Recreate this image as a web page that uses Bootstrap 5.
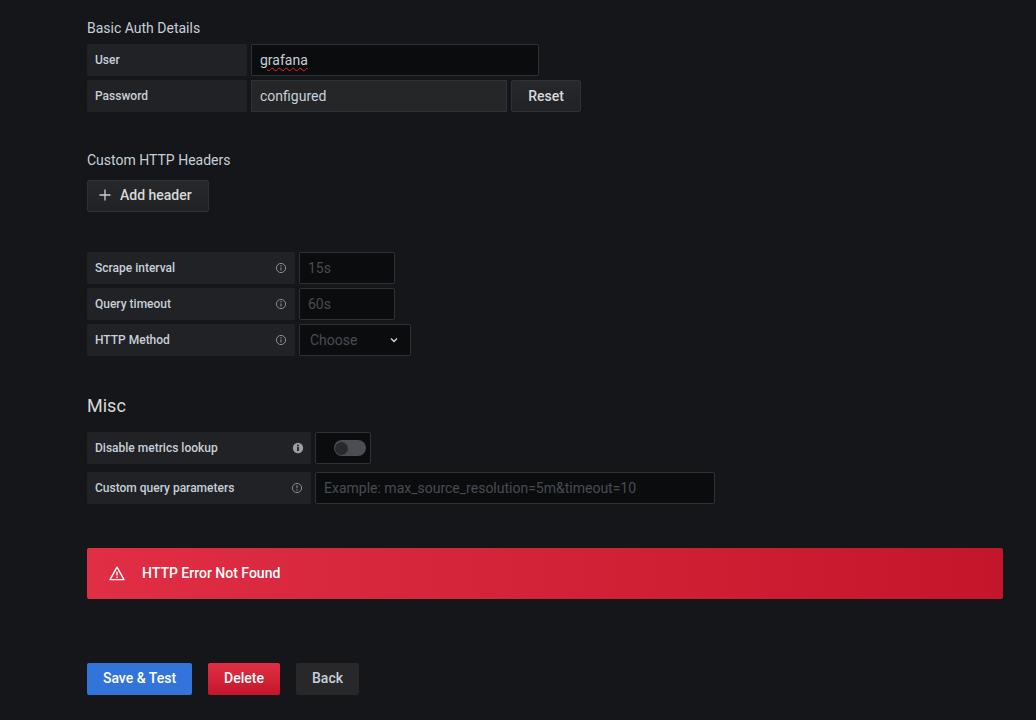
<!DOCTYPE html>
<html lang="en">
<head>
<meta charset="utf-8">
<title>Data source settings</title>
<link href="https://cdn.jsdelivr.net/npm/bootstrap@5.3.0/dist/css/bootstrap.min.css" rel="stylesheet">
<style>
html,body{height:720px;overflow:hidden}
body{background:#141619;color:#c7d0d9;font-family:Roboto,"Liberation Sans",sans-serif;font-size:14px}
.pg{padding:19px 33px 0 87px}
.sec-t{font-size:14px;line-height:18px;color:#c7d0d9;font-weight:400;margin:0 0 7px}
.sec-h{margin-bottom:11px}
.fgrid{display:flex;flex-direction:column;gap:4px}
.frow{display:flex;gap:4px;height:32px}
.flab{background:#202226;border-radius:2px;font-size:12px;font-weight:500;color:#c7d0d9;padding:0 8px;display:flex;align-items:center;justify-content:space-between;height:32px;flex:none;margin:0}
.w160{width:160px}.w208{width:208px}.w224{width:224px}
.finp{background:#0b0c0e;border:1px solid #2c3235;border-radius:2px;color:#c7d0d9;font-size:14px;height:32px;padding:0 8px;outline:0;flex:none;font-family:inherit;display:flex;align-items:center}
.finp::placeholder{color:#464c54;opacity:1}
.w288{width:288px}.w96{width:96px}.w400{width:400px}
.spell{text-decoration:underline wavy #f0202c 1px;text-underline-offset:2px}
.fro{background:#242628;border:1px solid #2c3235;width:256px;height:32px;color:#c7d0d9;font-size:14px;padding:0 8px;display:flex;align-items:center;flex:none}
.bsec{background:linear-gradient(#26282c,#202226);border:1px solid #2c3235;border-radius:2px;color:#d8d9da;font-weight:500;font-size:14px;height:32px;padding:0;display:flex;align-items:center;justify-content:center}
.bsec:hover{color:#d8d9da}
.w70{width:70px}
.addb{width:122px;margin-bottom:40px;gap:9px;justify-content:flex-start;padding:0 0 2px 11px}
.gap1{height:39px}
.sel{width:112px;background:#0b0c0e;border:1px solid #2c3235;border-radius:2px;height:32px;display:flex;align-items:center;justify-content:space-between;padding:0 12px 0 10px;color:#464c54;font-size:14px;flex:none}
.misc-t{font-size:18px;line-height:22px;color:#d8d9da;font-weight:400;margin:39px 0 15px}
.mgrid{display:flex;flex-direction:column;gap:8px}
.swb{width:56px;height:32px;background:#0b0c0e;border:1px solid #2c3235;border-radius:2px;display:flex;align-items:center;justify-content:flex-end;padding-right:4px;flex:none}
.trk{width:32px;height:16px;border-radius:8px;background:#4a4d52;display:flex;align-items:center}
.knb{width:13px;height:13px;border-radius:50%;background:#27292c;margin-left:1px}
.errb{background:linear-gradient(90deg,#e02f44,#c4162a);border-radius:2px;color:#fff;height:51px;margin:44px 0 64px;padding:0 22px;display:flex;align-items:center;gap:17px;font-weight:500;font-size:14px}
.acts{display:flex;gap:16px}
.bact{height:32px;border:0;border-radius:2px;font-weight:500;font-size:14px;padding:0 0 2px;display:flex;align-items:center;justify-content:center}
.bsave{width:105px;background:#3274d9;color:#fff}
.bdel{width:72px;background:linear-gradient(#e02f44,#c4162a);color:#fff}
.bback{width:63px;background:#28282a;color:#c7d0d9}
.shift1{margin-right:-1px}
svg{flex:none;display:block}
</style>
</head>
<body>
<main class="pg">
  <h6 class="sec-t">Basic Auth Details</h6>
  <div class="fgrid">
    <div class="frow">
      <label class="flab w160">User</label>
      <div class="finp w288"><span class="spell">grafana</span></div>
    </div>
    <div class="frow">
      <label class="flab w160">Password</label>
      <div class="fro">configured</div>
      <button class="btn bsec w70">Reset</button>
    </div>
  </div>
  <div class="gap1"></div>
  <h6 class="sec-t sec-h">Custom HTTP Headers</h6>
  <button class="btn bsec addb">
    <svg width="12" height="12" viewBox="0 0 12 12"><path d="M6 .5v11M.5 6h11" stroke="#c7d0d9" stroke-width="1.3"/></svg>
    <span>Add header</span>
  </button>
  <div class="fgrid">
    <div class="frow">
      <label class="flab w208">Scrape interval
        <svg width="12" height="12" viewBox="0 0 12 12"><circle cx="6" cy="6" r="4.6" fill="none" stroke="#8e8e8e" stroke-width="1"/><path d="M6 5.4v3" stroke="#8e8e8e" stroke-width="1.1"/><circle cx="6" cy="3.8" r=".7" fill="#8e8e8e"/></svg>
      </label>
      <input class="finp w96" placeholder="15s">
    </div>
    <div class="frow">
      <label class="flab w208">Query timeout
        <svg width="12" height="12" viewBox="0 0 12 12"><circle cx="6" cy="6" r="4.6" fill="none" stroke="#8e8e8e" stroke-width="1"/><path d="M6 5.4v3" stroke="#8e8e8e" stroke-width="1.1"/><circle cx="6" cy="3.8" r=".7" fill="#8e8e8e"/></svg>
      </label>
      <input class="finp w96" placeholder="60s">
    </div>
    <div class="frow">
      <label class="flab w208">HTTP Method
        <svg width="12" height="12" viewBox="0 0 12 12"><circle cx="6" cy="6" r="4.6" fill="none" stroke="#8e8e8e" stroke-width="1"/><path d="M6 5.4v3" stroke="#8e8e8e" stroke-width="1.1"/><circle cx="6" cy="3.8" r=".7" fill="#8e8e8e"/></svg>
      </label>
      <div class="sel"><span>Choose</span>
        <svg width="8" height="6" viewBox="0 0 8 6"><path d="M1 1.5l3 3 3-3" fill="none" stroke="#d8d9da" stroke-width="1.3"/></svg>
      </div>
    </div>
  </div>
  <h3 class="misc-t">Misc</h3>
  <div class="mgrid">
    <div class="frow">
      <label class="flab w224">Disable metrics lookup
        <svg class="shift1" width="12" height="12" viewBox="0 0 12 12"><circle cx="6" cy="6" r="5.2" fill="#9a9da1"/><rect x="5.1" y="5" width="1.8" height="4" fill="#202226"/><circle cx="6" cy="3.4" r="1" fill="#202226"/></svg>
      </label>
      <div class="swb"><div class="trk"><div class="knb"></div></div></div>
    </div>
    <div class="frow">
      <label class="flab w224">Custom query parameters
        <svg width="12" height="12" viewBox="0 0 12 12"><circle cx="6" cy="6" r="4.6" fill="none" stroke="#8e8e8e" stroke-width="1"/><path d="M6 3.2v3" stroke="#8e8e8e" stroke-width="1.1"/><circle cx="6" cy="8" r=".7" fill="#8e8e8e"/></svg>
      </label>
      <input class="finp w400" placeholder="Example: max_source_resolution=5m&amp;timeout=10">
    </div>
  </div>
  <div class="errb" role="alert">
    <svg width="16" height="15" viewBox="0 0 16 15"><path d="M8 1.2L15 13.6H1z" fill="none" stroke="#fff" stroke-width="1.4" stroke-linejoin="round"/><path d="M8 5.6v4" stroke="#fff" stroke-width="1.3"/><circle cx="8" cy="11.4" r=".8" fill="#fff"/></svg>
    <span>HTTP Error Not Found</span>
  </div>
  <div class="acts">
    <button class="btn bact bsave">Save &amp; Test</button>
    <button class="btn bact bdel">Delete</button>
    <button class="btn bact bback">Back</button>
  </div>
</main>
</body>
</html>
